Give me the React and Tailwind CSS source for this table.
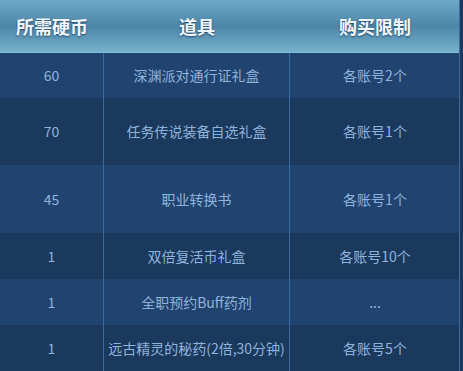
const rows = [
  { coin: "60", item: "深渊派对通行证礼盒", limit: "各账号2个", h: "h-[45px]", dark: false },
  { coin: "70", item: "任务传说装备自选礼盒", limit: "各账号1个", h: "h-[67px]", dark: true },
  { coin: "45", item: "职业转换书", limit: "各账号1个", h: "h-[68px]", dark: false },
  { coin: "1", item: "双倍复活币礼盒", limit: "各账号10个", h: "h-[46px]", dark: true },
  { coin: "1", item: "全职预约Buff药剂", limit: "...", h: "h-[46px]", dark: false },
  { coin: "1", item: "远古精灵的秘药(2倍,30分钟)", limit: "各账号5个", h: "h-[47px]", dark: true },
];

export default function App() {
  return (
    <div className="w-[463px] h-[371px] overflow-hidden bg-[#1c3a5f] font-['Microsoft_YaHei','Noto_Sans_CJK_SC',sans-serif]">
      <div className="w-[460px] border-r border-[#3c6b9c]">
        <div className="grid grid-cols-[104px_186px_170px] h-[53px] bg-gradient-to-b from-[#6fa9c8] via-[#4d86a8] to-[#76b1cc] border-b border-[#86bdd6]">
          {["所需硬币", "道具", "购买限制"].map((t) => (
            <div
              key={t}
              className="flex items-center justify-center text-[18px] font-bold text-[#f2f8fc] [text-shadow:0_1px_2px_rgba(20,50,80,0.8)]"
            >
              {t}
            </div>
          ))}
        </div>
        {rows.map((r, i) => (
          <div
            key={i}
            className={`grid grid-cols-[104px_186px_170px] ${r.h} ${r.dark ? "bg-[#1b385d]" : "bg-[#214370]"} text-[14px] text-[#8fb4db]`}
          >
            <div className="flex items-center justify-center border-r border-[#3a69a0]">{r.coin}</div>
            <div className="flex items-center justify-center border-r border-[#3a69a0] whitespace-nowrap">{r.item}</div>
            <div className="flex items-center justify-center">{r.limit}</div>
          </div>
        ))}
      </div>
    </div>
  );
}
